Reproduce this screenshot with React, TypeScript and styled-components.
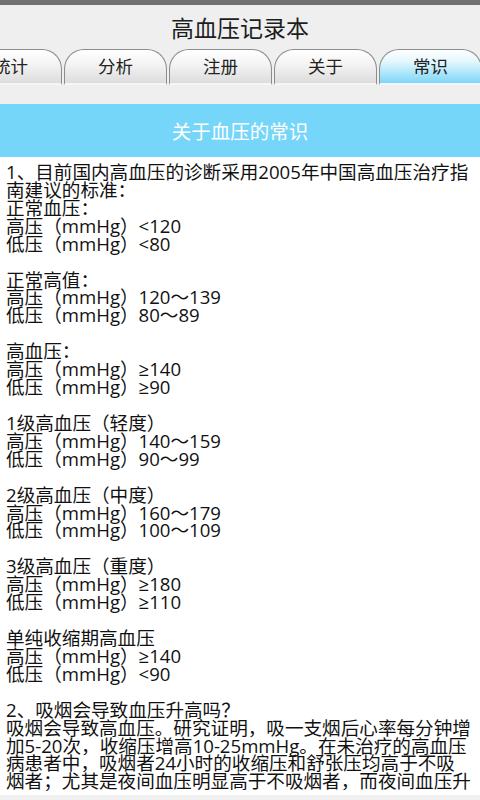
import styled, { createGlobalStyle } from "styled-components";

const GlobalStyle = createGlobalStyle`
  html, body {
    margin: 0;
    padding: 0;
    background: #efefef;
  }
  body {
    font-family: "Open Sans", "Noto Sans CJK SC", sans-serif;
  }
`;

const Screen = styled.div`
  width: 480px;
  height: 800px;
  overflow: hidden;
  display: flex;
  flex-direction: column;
  background: #efefef;
`;

const StatusBar = styled.div`
  height: 5px;
  background: #717171;
  flex-shrink: 0;
`;

const TitleBar = styled.div`
  height: 44px;
  display: flex;
  align-items: center;
  justify-content: center;
  font-size: 23px;
  color: #1e1e1e;
  flex-shrink: 0;
`;

const TabViewport = styled.div`
  height: 36px;
  overflow: hidden;
  flex-shrink: 0;
`;

const TabStrip = styled.div`
  display: flex;
  gap: 2px;
  margin-left: -41px;
  height: 100%;
`;

const Tab = styled.div<{ active?: boolean }>`
  flex: 0 0 103px;
  box-sizing: border-box;
  height: 36px;
  border: 1.5px solid #8c8c8c;
  border-bottom: 2px solid #f6f6f6;
  border-radius: 20px 20px 0 0;
  background: ${p =>
    p.active
      ? "linear-gradient(to bottom, #ffffff 0%, #e4f7fe 35%, #7dd7f8 100%)"
      : "linear-gradient(to bottom, #ffffff 0%, #f3f3f3 45%, #dcdcdc 100%)"};
  display: flex;
  align-items: center;
  justify-content: center;
  font-size: 17.5px;
  color: #222;
  padding-bottom: 2px;
`;

const Spacer = styled.div`
  height: 19px;
  flex-shrink: 0;
`;

const SectionHeader = styled.div`
  height: 53px;
  background: #76d6f9;
  color: #ffffff;
  display: flex;
  align-items: center;
  justify-content: center;
  font-size: 19.5px;
  flex-shrink: 0;
`;

const Content = styled.div`
  background: #ffffff;
  flex: 1;
  padding: 6px 0 0 6px;
  overflow: hidden;
  font-size: 18.6px;
  color: #111;
`;

const Line = styled.div`
  height: 17.93px;
  line-height: 17.93px;
  white-space: nowrap;
`;

const BottomStrip = styled.div`
  height: 5px;
  background: #f0f0f0;
  flex-shrink: 0;
`;

const tabs = ["统计", "分析", "注册", "关于", "常识"];

const lines = [
  "1、目前国内高血压的诊断采用2005年中国高血压治疗指",
  "南建议的标准：",
  "正常血压：",
  "高压（mmHg）<120",
  "低压（mmHg）<80",
  "",
  "正常高值：",
  "高压（mmHg）120～139",
  "低压（mmHg）80～89",
  "",
  "高血压：",
  "高压（mmHg）≥140",
  "低压（mmHg）≥90",
  "",
  "1级高血压（轻度）",
  "高压（mmHg）140～159",
  "低压（mmHg）90～99",
  "",
  "2级高血压（中度）",
  "高压（mmHg）160～179",
  "低压（mmHg）100～109",
  "",
  "3级高血压（重度）",
  "高压（mmHg）≥180",
  "低压（mmHg）≥110",
  "",
  "单纯收缩期高血压",
  "高压（mmHg）≥140",
  "低压（mmHg）<90",
  "",
  "2、吸烟会导致血压升高吗？",
  "吸烟会导致高血压。研究证明，吸一支烟后心率每分钟增",
  "加5-20次，收缩压增高10-25mmHg。在未治疗的高血压",
  "病患者中，吸烟者24小时的收缩压和舒张压均高于不吸",
  "烟者；尤其是夜间血压明显高于不吸烟者，而夜间血压升",
];

export default function App() {
  return (
    <>
      <GlobalStyle />
      <Screen>
        <StatusBar />
        <TitleBar>高血压记录本</TitleBar>
        <TabViewport>
          <TabStrip>
            {tabs.map((t, i) => (
              <Tab key={i} active={t === "常识"}>
                {t}
              </Tab>
            ))}
          </TabStrip>
        </TabViewport>
        <Spacer />
        <SectionHeader>关于血压的常识</SectionHeader>
        <Content>
          {lines.map((l, i) => (
            <Line key={i}>{l || "\u00a0"}</Line>
          ))}
        </Content>
        <BottomStrip />
      </Screen>
    </>
  );
}
